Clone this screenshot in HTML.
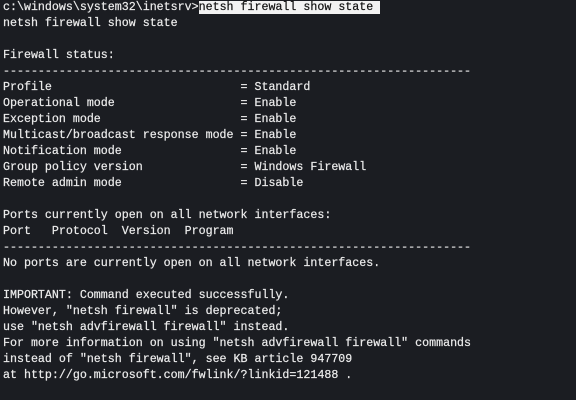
<!DOCTYPE html>
<html><head><style>
html,body{margin:0;padding:0;background:#1b1d22;width:576px;height:400px;overflow:hidden}
pre{margin:0;padding:0 0 0 3px;font-family:"Liberation Mono",monospace;font-size:11.65px;line-height:16px;color:#ececec;position:relative;top:0;-webkit-text-stroke:0.2px #ececec}
.h{background:#f2f2f2;color:#111;-webkit-text-stroke:0.2px #111}
</style></head><body><pre>c:\windows\system32\inetsrv&gt;<span class="h">netsh firewall show state </span>
netsh firewall show state

Firewall status:
-------------------------------------------------------------------
Profile                           = Standard
Operational mode                  = Enable
Exception mode                    = Enable
Multicast/broadcast response mode = Enable
Notification mode                 = Enable
Group policy version              = Windows Firewall
Remote admin mode                 = Disable

Ports currently open on all network interfaces:
Port   Protocol  Version  Program
-------------------------------------------------------------------
No ports are currently open on all network interfaces.

IMPORTANT: Command executed successfully.
However, "netsh firewall" is deprecated;
use "netsh advfirewall firewall" instead.
For more information on using "netsh advfirewall firewall" commands
instead of "netsh firewall", see KB article 947709
at http://go.microsoft.com/fwlink/?linkid=121488 .</pre></body></html>
